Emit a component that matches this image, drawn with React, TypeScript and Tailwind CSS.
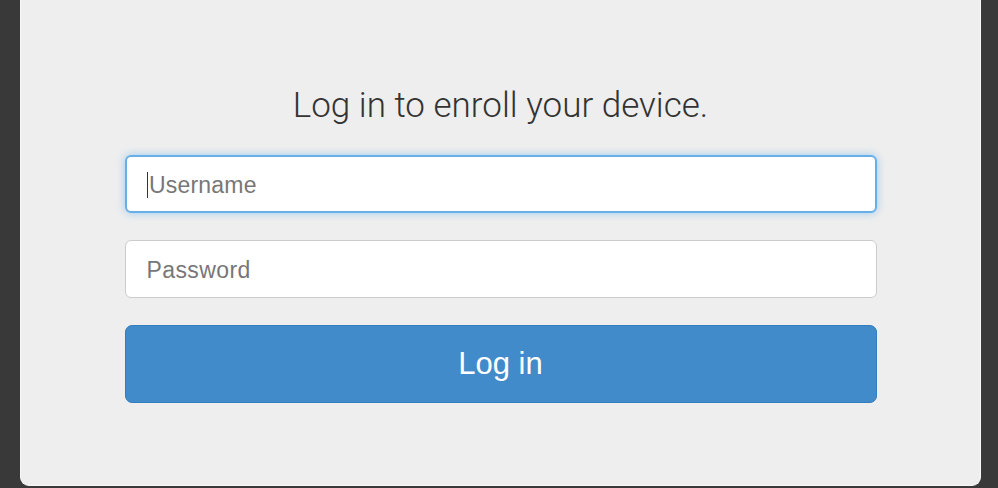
import React from "react";

export default function App() {
  return (
    <div className="w-full h-[488px] bg-[#393939] flex" style={{ fontFamily: '"Liberation Sans", Arial, sans-serif' }}>
      <div className="ml-[20px] w-[961px] h-[486px] bg-[#eeeeee] border-x border-b border-[#f8f8f8] rounded-b-[9px] flex flex-col items-center">
        <h1
          className="mt-[85px] text-[35px] leading-[42px] text-[#333333] font-light"
          style={{ fontFamily: 'Roboto, "Liberation Sans", sans-serif' }}
        >
          Log in to enroll your device.
        </h1>
        <div className="mt-[28px] w-[752px] flex flex-col">
          <div className="h-[58px] bg-white rounded-[6px] border-2 border-[#66afe9] shadow-[0_0_8px_rgba(102,175,233,0.6)] flex items-center pl-[20px] pt-[2px]">
            <span className="w-[1.5px] h-[26px] bg-[#333] mr-[1px]"></span>
            <span className="text-[23px] tracking-[0.2px] text-[#777777]">Username</span>
          </div>
          <div className="mt-[27px] h-[58px] bg-white rounded-[6px] border border-[#cccccc] flex items-center pl-[21px] pt-[2px]">
            <span className="text-[23px] tracking-[0.4px] text-[#777777]">Password</span>
          </div>
          <div className="mt-[27px] h-[78px] bg-[#428bca] rounded-[7px] border border-[#357ebd] flex items-center justify-center">
            <span className="text-[31px] text-white">Log in</span>
          </div>
        </div>
      </div>
    </div>
  );
}
